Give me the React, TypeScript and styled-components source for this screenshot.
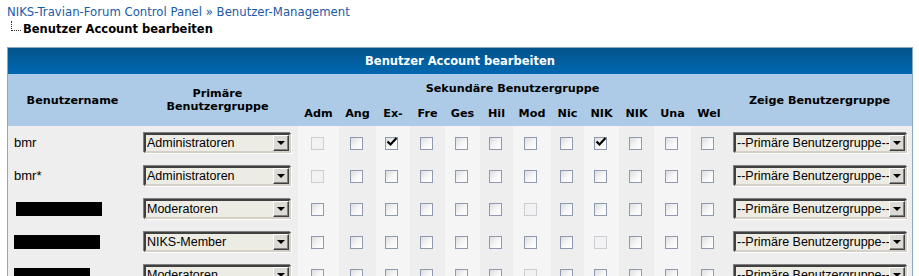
import React, { FC } from 'react'
import styled, { createGlobalStyle, css } from 'styled-components'

const GlobalStyle = createGlobalStyle`
  html, body {
    margin: 0;
    padding: 0;
    background: #ffffff;
  }
`

const widths = [129, 161, 41, 37, 34, 35, 35, 33, 38, 33, 35, 35, 37, 36, 185]
const groups = ['Adm', 'Ang', 'Ex-', 'Fre', 'Ges', 'Hil', 'Mod', 'Nic', 'NIK', 'NIK', 'Una', 'Wel']

type Row = {
  name?: string
  redact?: number
  shift?: number
  primary: string
  checked: number[]
  disabled: number[]
}

const rows: Row[] = [
  { name: 'bmr', primary: 'Administratoren', checked: [2, 8], disabled: [0] },
  { name: 'bmr*', primary: 'Administratoren', checked: [], disabled: [0] },
  { redact: 86, shift: 2, primary: 'Moderatoren', checked: [], disabled: [6] },
  { redact: 86, primary: 'NIKS-Member', checked: [], disabled: [8] },
  { redact: 76, primary: 'Moderatoren', checked: [], disabled: [6] },
]

// column shade: name, primary dark; checkboxes alternate starting light; Zeige dark
const isLight = (col: number) => col >= 2 && col <= 13 && (col - 2) % 2 === 0

const Checkbox: FC<{ checked?: boolean; disabled?: boolean }> = ({ checked, disabled }) => (
  <Box $disabled={disabled}>
    {checked && (
      <svg width="14" height="14" viewBox="0 0 14 14">
        <path d="M2.5 6.5 L5.5 9.5 L11.5 3" fill="none" stroke="#000" strokeWidth="2.2" />
      </svg>
    )}
  </Box>
)

const Select: FC<{ value: string; width: number }> = ({ value, width }) => (
  <SelectBox $w={width}>
    <SelectText>{value}</SelectText>
    <SelectButton>
      <Arrow />
    </SelectButton>
  </SelectBox>
)

export default function App() {
  return (
    <Page>
      <GlobalStyle />
      <Crumbs>
        <CrumbLink>NIKS-Travian-Forum Control Panel</CrumbLink>
        <Sep> » </Sep>
        <CrumbLink>Benutzer-Management</CrumbLink>
      </Crumbs>
      <Current>
        <Tree />
        <strong>Benutzer Account bearbeiten</strong>
      </Current>

      <Table>
        <colgroup>
          {widths.map((w, i) => (
            <Col key={i} $w={w} />
          ))}
        </colgroup>
        <thead>
          <tr>
            <TitleCell colSpan={15}>Benutzer Account bearbeiten</TitleCell>
          </tr>
          <tr>
            <HeadCell rowSpan={2}>Benutzername</HeadCell>
            <HeadCell rowSpan={2}>
              Primäre
              <br />
              Benutzergruppe
            </HeadCell>
            <HeadCell colSpan={12} $top>
              Sekundäre Benutzergruppe
            </HeadCell>
            <HeadCell rowSpan={2}>Zeige Benutzergruppe</HeadCell>
          </tr>
          <tr>
            {groups.map((g, i) => (
              <HeadCell key={i}>{g}</HeadCell>
            ))}
          </tr>
        </thead>
        <tbody>
          {rows.map((r, ri) => (
            <tr key={ri}>
              <NameCell>
                {r.name ? r.name : <Redacted $w={r.redact || 80} $shift={r.shift || 0} />}
              </NameCell>
              <Cell $light={false} $pad={6}>
                <Select value={r.primary} width={147} />
              </Cell>
              {groups.map((_, gi) => (
                <Cell key={gi} $light={isLight(gi + 2)} $center>
                  <Checkbox checked={r.checked.includes(gi)} disabled={r.disabled.includes(gi)} />
                </Cell>
              ))}
              <Cell $light={false} $pad={6}>
                <Select value="--Primäre Benutzergruppe--" width={173} />
              </Cell>
            </tr>
          ))}
        </tbody>
      </Table>
    </Page>
  )
}

const Page = styled.div`
  padding: 5px 6px 0 7px;
  font-family: 'DejaVu Sans', Verdana, sans-serif;
`

const Crumbs = styled.div`
  height: 15px;
  line-height: 15px;
  font-size: 11.7px;
  color: #1b5aa6;
`

const CrumbLink = styled.span`
  color: #1b5aa6;
`

const Sep = styled.span`
  color: #1b5aa6;
`

const Current = styled.div`
  display: flex;
  align-items: center;
  height: 18px;
  font-size: 11.5px;
  color: #000;
  margin-bottom: 9px;
`

const Tree = styled.span`
  display: inline-block;
  width: 9px;
  height: 9px;
  margin: 0 2px 6px 4px;
  border-left: 1px dotted #333;
  border-bottom: 1px dotted #333;
`

const Table = styled.table`
  width: 906px;
  table-layout: fixed;
  border-collapse: separate;
  border-spacing: 0;
  border: 1px solid #8eaacb;
  border-bottom: none;
`

const Col = styled.col<{ $w: number }>`
  width: ${({ $w }) => $w}px;
`

const TitleCell = styled.td`
  height: 26px;
  padding: 0;
  text-align: center;
  vertical-align: middle;
  background: linear-gradient(to bottom, #03538a 0%, #0068b2 100%);
  color: #ffffff;
  font-weight: bold;
  font-size: 11.5px;
`

const HeadCell = styled.td<{ $top?: boolean }>`
  height: 25px;
  padding: 0;
  background: #adcbe6;
  color: #000;
  font-weight: bold;
  font-size: 11.2px;
  line-height: 13px;
  text-align: center;
  vertical-align: middle;
  white-space: nowrap;
  ${({ $top }) =>
    $top &&
    css`
      padding-top: 2px;
    `}
`

const NameCell = styled.td`
  height: 33px;
  padding: 0 0 0 6px;
  background: #eeeeee;
  font-family: 'Liberation Sans', Arial, sans-serif;
  font-size: 13px;
  color: #000;
  vertical-align: middle;
`

const Redacted = styled.span<{ $w: number; $shift: number }>`
  display: inline-block;
  width: ${({ $w }) => $w}px;
  height: 14px;
  margin-left: ${({ $shift }) => $shift}px;
  background: #000;
  vertical-align: middle;
`

const Cell = styled.td<{ $light: boolean; $pad?: number; $center?: boolean }>`
  height: 33px;
  padding: 0 0 0 ${({ $pad }) => $pad || 0}px;
  background: ${({ $light }) => ($light ? '#f5f5f5' : '#eeeeee')};
  vertical-align: middle;
  text-align: ${({ $center }) => ($center ? 'center' : 'left')};
`

const Box = styled.span<{ $disabled?: boolean }>`
  display: inline-block;
  width: 11px;
  height: 11px;
  border: 1px solid ${({ $disabled }) => ($disabled ? '#cbcdd2' : '#8f9aae')};
  background: ${({ $disabled }) =>
    $disabled ? '#f2f2f2' : 'linear-gradient(135deg, #dcdde0 0%, #f7f7f8 55%, #ffffff 100%)'};
  vertical-align: middle;
  margin-right: 3px;
  position: relative;
  overflow: visible;

  svg {
    position: absolute;
    left: -1px;
    top: -3px;
  }
`

const SelectBox = styled.div<{ $w: number }>`
  display: flex;
  align-items: center;
  box-sizing: border-box;
  width: ${({ $w }) => $w}px;
  height: 20px;
  background: #ecebe4;
  border-style: solid;
  border-width: 2px;
  border-color: #404040 #d4d0c8 #d4d0c8 #404040;
  box-shadow: -1px -1px 0 #808080, 1px 1px 0 #ffffff;
  margin-left: 1px;
`

const SelectText = styled.span`
  flex: 1;
  padding-left: 1px;
  font-family: 'Liberation Sans', Arial, sans-serif;
  font-size: 12.5px;
  color: #000;
  white-space: nowrap;
  overflow: hidden;
`

const SelectButton = styled.span`
  display: flex;
  align-items: center;
  justify-content: center;
  box-sizing: border-box;
  width: 16px;
  height: 16px;
  background: #dcdad5;
  border-style: solid;
  border-width: 1px;
  border-color: #ffffff #404040 #404040 #ffffff;
  box-shadow: inset -1px -1px 0 #808080;
`

const Arrow = styled.span`
  width: 0;
  height: 0;
  border-left: 4px solid transparent;
  border-right: 4px solid transparent;
  border-top: 4px solid #000;
`
